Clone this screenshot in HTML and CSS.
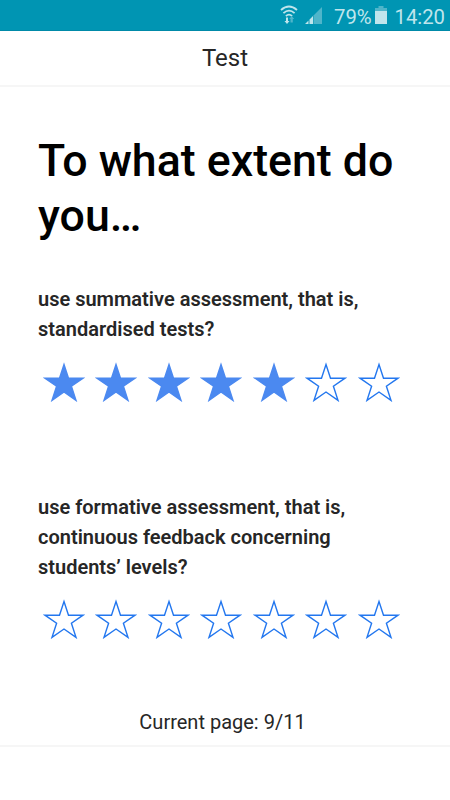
FILE: index.html
```html
<!DOCTYPE html>
<html lang="en">
   <head>
      <meta charset="UTF-8">
      <meta name="viewport" content="width=device-width, initial-scale=1.0">
      <title>Test</title>
      <link rel="stylesheet" href="styles.css">
   </head>
   <body>
      <svg width="0" height="0" class="symbols">
         <symbol id="star" viewBox="0 0 42 40">
            <path d="M21 2.5 25.5 16.2H40L28.4 24.2 33 38.4 21 30 9 38.4 13.6 24.2 2 16.2H16.5Z"/>
         </symbol>
      </svg>
      <div class="status">
         <svg class="wifi" width="18" height="20" viewBox="0 0 18 20">
            <path class="waves" d="M1 5Q9-2 17 5M3.4 8.2Q9 3 14.6 8.2M5.9 11.1Q9 8 12.1 11.1"/>
            <path class="down" d="M6 12.5h2v3.5h1.5l-2.5 3-2.5-3h1.5z"/>
            <path class="up" d="M10.5 17.5v-3.5h-1.3l2.5-3 2.5 3h-1.4v3.5z"/>
         </svg>
         <svg class="signal" width="17" height="17" viewBox="0 0 17 17">
            <path class="faint" d="M8.5 8.5 17 0V17H8.5z"/>
            <path class="bars" d="M0 17 3.5 13.5V17zM4.5 12.5 8 9V17H4.5z"/>
         </svg>
         <span class="percent">79%</span>
         <svg class="battery" width="12" height="18" viewBox="0 0 12 18">
            <path class="faint" d="M3.5 0h5v2H12v3H0V2h3.5z"/>
            <path class="bars" d="M0 5h12v13H0z"/>
         </svg>
         <span class="time">14:20</span>
      </div>
      <header>Test</header>
      <main>
         <h1>To what extent do you…</h1>
         <section class="first">
            <p>use summative assessment, that is, standardised tests?</p>
            <div class="stars">
               <svg class="star on"><use href="#star"/></svg>
               <svg class="star on"><use href="#star"/></svg>
               <svg class="star on"><use href="#star"/></svg>
               <svg class="star on"><use href="#star"/></svg>
               <svg class="star on"><use href="#star"/></svg>
               <svg class="star"><use href="#star"/></svg>
               <svg class="star"><use href="#star"/></svg>
            </div>
         </section>
         <section>
            <p>use formative assessment, that is, continuous feedback concerning students’ levels?</p>
            <div class="stars">
               <svg class="star"><use href="#star"/></svg>
               <svg class="star"><use href="#star"/></svg>
               <svg class="star"><use href="#star"/></svg>
               <svg class="star"><use href="#star"/></svg>
               <svg class="star"><use href="#star"/></svg>
               <svg class="star"><use href="#star"/></svg>
               <svg class="star"><use href="#star"/></svg>
            </div>
         </section>
      </main>
      <footer>Current page: 9/11</footer>
   </body>
</html>
```
FILE: styles.css
```css
* {
box-sizing: border-box;
}
body {
display: flex;
flex-direction: column;
height: 800px;
margin: 0;
overflow: hidden;
background: #fff;
color: #262626;
font-family: Roboto, sans-serif;
}
.symbols {
display: none;
}
.status {
display: flex;
flex: none;
height: 31px;
padding: 0 5px 0 280px;
background: #0095b3;
border-bottom: 1px solid #008aa8;
color: #bfe5ec;
font-size: 20.3px;
line-height: 34px;
}
.wifi {
margin-top: 5px;
}
.waves {
fill: none;
stroke: #bfe5ec;
stroke-width: 1.8;
}
.down,
.bars {
fill: #bfe5ec;
}
.up,
.faint {
fill: #4fb5ca;
}
.signal {
margin: 7px 0 0 7px;
}
.percent {
width: 38px;
margin-left: 12px;
}
.battery {
flex: none;
margin: 6px 0 0 2.5px;
}
.time {
margin-left: 8px;
}
header {
flex: none;
height: 56px;
border-bottom: 2px solid #f6f6f6;
font-size: 24px;
line-height: 55px;
text-align: center;
}
main {
padding: 47px 38px 0;
}
h1 {
margin: 0;
color: #000;
font-size: 44.7px;
font-weight: 500;
line-height: 55px;
}
section {
margin-top: 42px;
}
.first {
height: 166px;
margin-top: 40px;
}
.first .stars {
margin-top: 18px;
}
p {
margin: 0;
font-size: 20px;
font-weight: 600;
line-height: 30px;
}
.stars {
display: flex;
gap: 10.5px;
margin: 17px 0 0 4.6px;
}
.star {
flex: none;
width: 42px;
height: 40px;
fill: none;
stroke: #2377ef;
stroke-width: 1.4;
}
.on {
fill: #4b89f0;
stroke: #4b89f0;
}
footer {
flex: none;
height: 49px;
margin-top: auto;
margin-bottom: 53px;
padding-right: 5px;
border-bottom: 2px solid #f6f6f6;
font-size: 20px;
line-height: 48px;
text-align: center;
}
```
